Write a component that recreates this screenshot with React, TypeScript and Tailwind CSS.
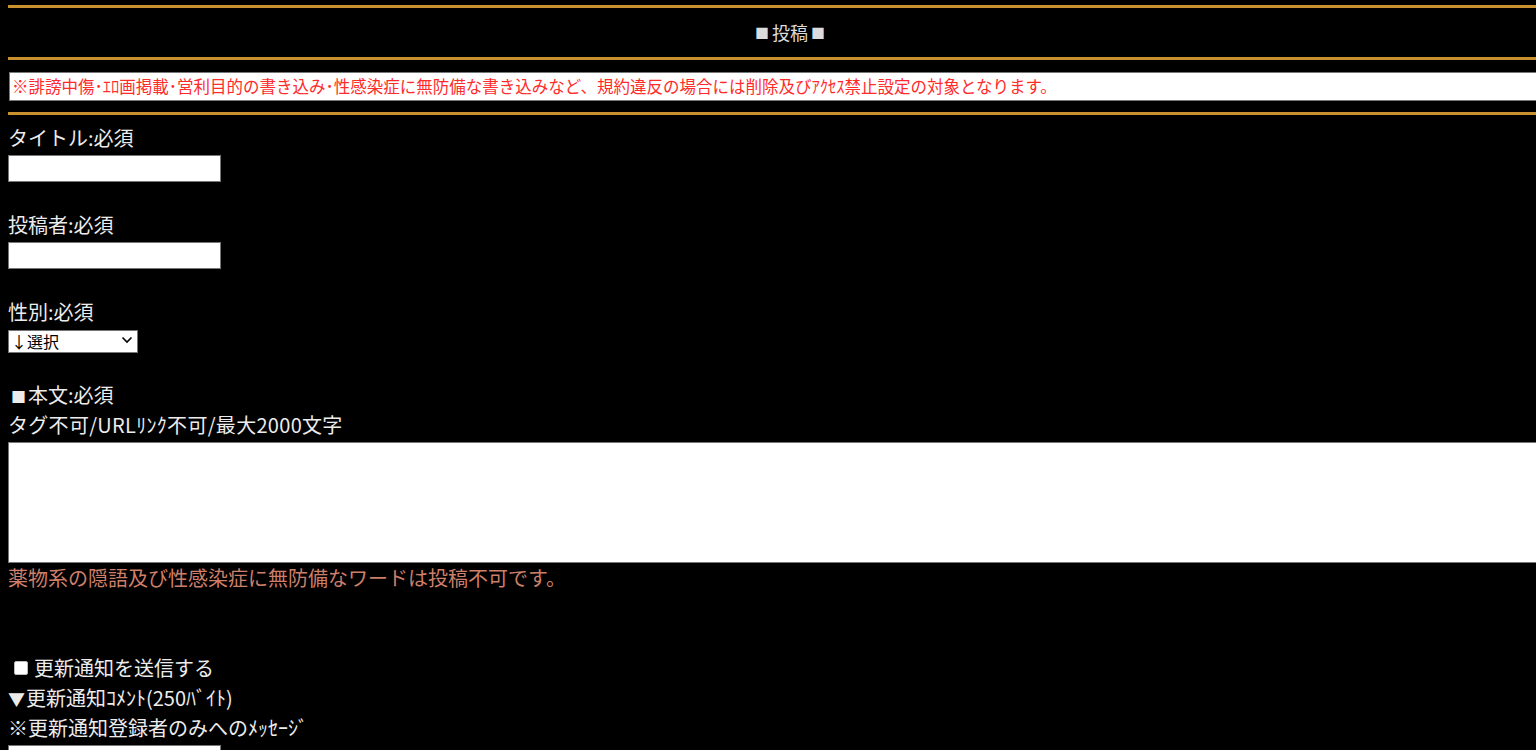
import React from "react";

const gold = "h-[3px] bg-[#c8902e]";

const Field = ({ label }: { label: string }) => (
  <div className="mb-[28px]">
    <div className="h-[30px] leading-[30px] text-[20px]">{label}</div>
    <input
      type="text"
      className="mt-[2px] block h-[27px] w-[213px] border border-[#767676] bg-white"
    />
  </div>
);

export default function App() {
  return (
    <div
      className="min-h-screen overflow-hidden bg-black text-[#ececec]"
      style={{ fontFamily: '"Noto Sans CJK JP", "Noto Sans", sans-serif' }}
    >
      <div className="ml-[8px] w-[1564px] pt-[5px]">
        {/* Header */}
        <div className={gold} />
        <div className="flex h-[49px] items-center justify-center text-[18px] text-[#dcdcdc]">
          <span className="mr-[3px] text-[14px]">■</span>投稿<span className="ml-[3px] text-[14px]">■</span>
        </div>
        <div className={gold} />

        {/* Notice */}
        <div className="mt-[12px] ml-px flex h-[29px] items-center border border-[#777] bg-white pl-[2px] text-[16.5px] text-[#ff2b2b]">
          ※誹謗中傷･ｴﾛ画掲載･営利目的の書き込み･性感染症に無防備な書き込みなど、規約違反の場合には削除及びｱｸｾｽ禁止設定の対象となります。
        </div>
        <div className={`${gold} mt-[11px]`} />

        {/* Form */}
        <div className="mt-[8px]">
          <Field label="タイトル:必須" />
          <Field label="投稿者:必須" />

          <div className="mb-[28px]">
            <div className="h-[30px] leading-[30px] text-[20px]">性別:必須</div>
            <div className="relative mt-[2px] h-[23px] w-[130px]">
              <select className="h-full w-full appearance-none border border-[#767676] bg-white pl-[2px] text-[16px] leading-[21px] text-black">
                <option>↓選択</option>
              </select>
              <svg
                className="pointer-events-none absolute right-[5px] top-[6px]"
                width="12"
                height="10"
                viewBox="0 0 12 10"
              >
                <path d="M1.5 2.5 L6 7 L10.5 2.5" fill="none" stroke="#000" strokeWidth="1.6" />
              </svg>
            </div>
          </div>

          <div className="h-[30px] leading-[30px] text-[20px]">
            <span className="ml-[3px] mr-[2px] text-[15px]">■</span>本文:必須
          </div>
          <div className="h-[30px] leading-[30px] text-[20px] tracking-[0.3px]">
            タグ不可/URLﾘﾝｸ不可/最大2000文字
          </div>
          <textarea className="mt-[2px] block h-[121px] w-full resize-none border border-[#767676] bg-white" />
          <div className="h-[30px] leading-[30px] text-[20px] text-[#cd7f6a]">
            薬物系の隠語及び性感染症に無防備なワードは投稿不可です。
          </div>

          <div className="mt-[60px] flex h-[30px] items-center text-[20px]">
            <span className="ml-[6px] mr-[6px] block h-[14px] w-[14px] shrink-0 rounded-[2px] border border-[#bbb] bg-white" />
            更新通知を送信する
          </div>
          <div className="h-[30px] leading-[30px] text-[20px]">
            <span className="mr-[1px] text-[17px]">▼</span>更新通知ｺﾒﾝﾄ(250ﾊﾞｲﾄ)
          </div>
          <div className="h-[30px] leading-[30px] text-[20px]">※更新通知登録者のみへのﾒｯｾｰｼﾞ</div>
          <input
            type="text"
            className="mt-[2px] block h-[27px] w-[213px] border border-[#767676] bg-white"
          />
        </div>
      </div>
    </div>
  );
}
